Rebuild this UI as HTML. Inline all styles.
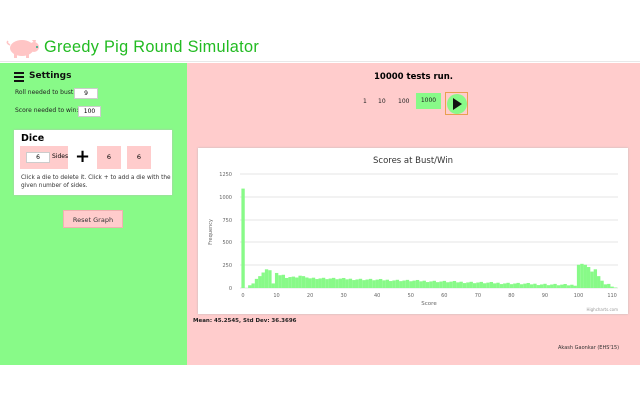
<!DOCTYPE html>
<html><head><meta charset="utf-8">
<style>
*{margin:0;padding:0;box-sizing:border-box}
body{width:640px;height:400px;position:relative;font-family:"DejaVu Sans","Liberation Sans",sans-serif;background:#fff;overflow:hidden}
.hdr{position:absolute;left:0;top:0;width:640px;height:62px;background:#fff;border-bottom:1px solid #e8e8e8}
.title{position:absolute;left:44px;top:38px;font-family:"Liberation Sans",sans-serif;font-size:16.3px;color:#22bb22;letter-spacing:.3px}
.left{position:absolute;left:0;top:63px;width:187px;height:302px;background:#88fa88}
.right{position:absolute;left:187px;top:63px;width:453px;height:302px;background:#ffcccc}
.small{font-size:6px;color:#222;position:absolute}
.inp{position:absolute;background:#fff;border:1px solid #ccc;font-size:6px;text-align:center;line-height:10px;height:11px}
.box{position:absolute;background:#fff;box-shadow:0 0 2px #bbb}
.pk{position:absolute;background:#ffcccc;font-size:6.5px;text-align:center}
</style></head><body>
<div class="hdr">
<svg style="position:absolute;left:6px;top:37px" width="34" height="22" viewBox="0 0 34 22"><g fill="#ffc5c5"><ellipse cx="16" cy="11" rx="12" ry="8"/><circle cx="28" cy="10" r="5"/><rect x="8" y="15" width="3" height="6"/><rect x="20" y="15" width="3" height="6"/><polygon points="26,3 30,3 29,7"/><path d="M4 8 q-4 -2 -2 -4" stroke="#ffc5c5" fill="none" stroke-width="1.5"/></g><circle cx="31" cy="10" r="1" fill="#2a8"/></svg>
<div class="title">Greedy Pig Round Simulator</div>
</div>
<div class="left">
<div style="position:absolute;left:14px;top:9px;width:10px">
<div style="height:2px;background:#111;margin-bottom:2px"></div><div style="height:2px;background:#111;margin-bottom:2px"></div><div style="height:2px;background:#111"></div></div>
<div style="position:absolute;left:29px;top:8px;font-size:9px;font-weight:bold;color:#111">Settings</div>
<div class="small" style="left:15px;top:26px">Roll needed to bust:</div>
<div class="inp" style="left:74px;top:25px;width:24px">9</div>
<div class="small" style="left:15px;top:44px">Score needed to win:</div>
<div class="inp" style="left:78px;top:43px;width:23px">100</div>
<div class="box" style="left:14px;top:67px;width:158px;height:65px">
<div style="position:absolute;left:7px;top:3px;font-size:9.5px;font-weight:bold">Dice</div>
<div class="pk" style="left:6px;top:16px;width:48px;height:23px"><div class="inp" style="left:6px;top:6px;width:24px">6</div><div style="position:absolute;left:32px;top:7px;font-size:6px">Sides</div></div>
<div style="position:absolute;left:61px;top:18px;font-size:18px;font-weight:bold;line-height:18px">+</div>
<div class="pk" style="left:83px;top:16px;width:24px;height:23px;line-height:23px">6</div>
<div class="pk" style="left:113px;top:16px;width:24px;height:23px;line-height:23px">6</div>
<div class="small" style="left:7px;top:44px;width:150px;line-height:8px;color:#333;font-size:5.8px">Click a die to delete it. Click + to add a die with the given number of sides.</div>
</div>
<div class="pk" style="left:63px;top:147px;width:60px;height:18px;line-height:18px;color:#333;border:1px solid #f0b0b0">Reset Graph</div>
</div>
<div class="right">
<div style="position:absolute;left:0;width:453px;top:9px;text-align:center;font-size:8.5px;font-weight:bold">10000 tests run.</div>
<div class="small" style="left:176px;top:35px">1</div>
<div class="small" style="left:191px;top:35px">10</div>
<div class="small" style="left:211px;top:35px">100</div>
<div class="small" style="left:229px;top:30px;width:25px;height:16px;background:#88fa88;line-height:16px;text-align:center">1000</div>
<div style="position:absolute;left:258px;top:29px;width:23px;height:23px;border:1px solid #e8a050"><div style="position:absolute;left:1px;top:1px;width:20px;height:20px;border-radius:50%;background:#88fa88"></div><div style="position:absolute;left:7px;top:5px;border-left:9px solid #111;border-top:6px solid transparent;border-bottom:6px solid transparent"></div></div>
<div style="position:absolute;left:6px;top:255px;font-size:5.5px;font-weight:bold;color:#222">Mean: 45.2545, Std Dev: 36.3696</div>
<div style="position:absolute;left:371px;top:282px;font-size:5px;color:#333">Akash Gaonkar (EHS'15)</div>
</div>
<div class="box" style="left:198px;top:148px;width:430px;height:166px"></div>
<svg id="ch" style="position:absolute;left:198px;top:148px" width="430" height="166" font-family="DejaVu Sans, sans-serif">
<text x="215" y="15" font-size="8.5" text-anchor="middle" fill="#333">Scores at Bust/Win</text>
<g stroke="#ddd" stroke-width="0.7">
<line x1="42" x2="420" y1="26" y2="26"/><line x1="42" x2="420" y1="49" y2="49"/><line x1="42" x2="420" y1="72" y2="72"/><line x1="42" x2="420" y1="94" y2="94"/><line x1="42" x2="420" y1="117" y2="117"/><line x1="42" x2="420" y1="140" y2="140"/></g>
<g font-size="5" fill="#666" text-anchor="end"><text x="34" y="28">1250</text><text x="34" y="51">1000</text><text x="34" y="74">750</text><text x="34" y="96">500</text><text x="34" y="119">250</text><text x="34" y="142">0</text></g>
<text x="14" y="84" font-size="5" fill="#666" transform="rotate(-90 14 84)" text-anchor="middle">Frequency</text>
<text x="231" y="157" font-size="5.5" fill="#666" text-anchor="middle">Score</text>
<text x="420" y="163" font-size="4" fill="#999" text-anchor="end">Highcharts.com</text>
<g id="bars" fill="#88fa88"></g>
<g id="xl" font-size="5" fill="#666" text-anchor="middle"></g>
</svg>
<script>
var v=[1090,0,30,50,100,130,170,205,195,50,165,140,145,110,120,125,115,135,130,115];
for(var i=20;i<100;i++){v.push(Math.max(25,110-(i-20)*1.0+((i*37)%11-5)*2));}
v=v.concat([255,265,255,230,180,205,130,80,40,45,15,5]);
var g=document.getElementById('bars'),s='';
var x0=45,w=3.355,y0=140,k=114/1250;
for(var i=0;i<v.length;i++){var h=v[i]*k;s+='<rect x="'+(x0-1.6+i*w).toFixed(2)+'" y="'+(y0-h).toFixed(2)+'" width="'+w+'" height="'+h.toFixed(2)+'"/>';}
g.innerHTML=s;
var t='';for(var j=0;j<=110;j+=10){t+='<text x="'+(x0+j*w).toFixed(1)+'" y="149">'+j+'</text>';}
document.getElementById('xl').innerHTML=t;
</script>
</body></html>
